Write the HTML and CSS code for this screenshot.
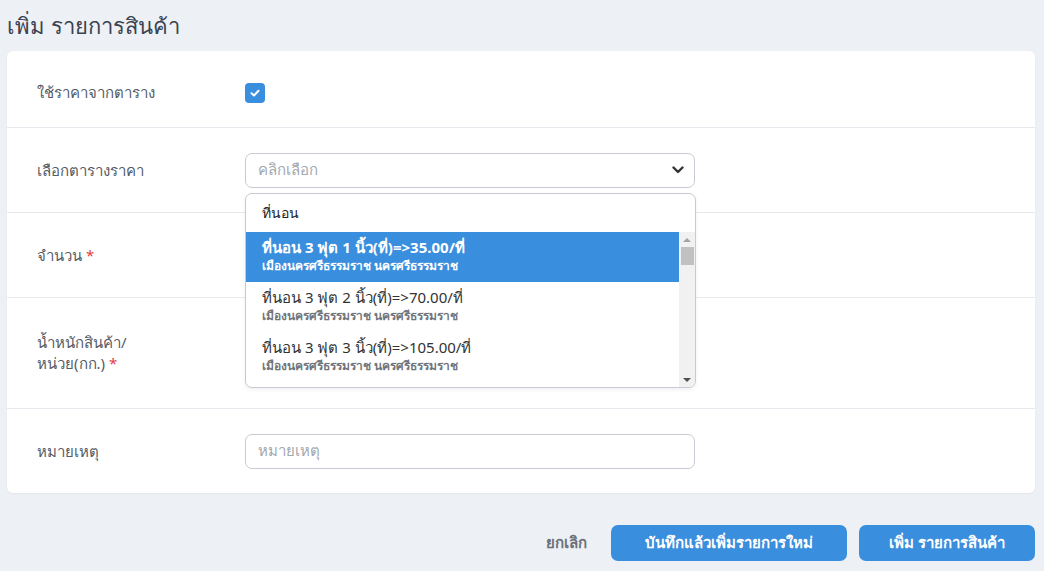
FILE: index.html
```html
<!DOCTYPE html>
<html lang="th">
<head>
<meta charset="utf-8">
<link rel="stylesheet" href="styles.css">
</head>
<body>
<div class="page">
  <h1 class="title">เพิ่ม รายการสินค้า</h1>
  <div class="card">
    <div class="row row-check">
      <div class="label">ใช้ราคาจากตาราง</div>
      <div class="field">
        <span class="checkbox">
          <svg width="12" height="12" viewBox="0 0 12 12"><path d="M2.5 6.2 L5 8.5 L9.5 3.8" fill="none" stroke="#fff" stroke-width="2" stroke-linecap="round" stroke-linejoin="round"/></svg>
        </span>
      </div>
    </div>
    <div class="row">
      <div class="label">เลือกตารางราคา</div>
      <div class="field">
        <div class="select-wrap">
          <div class="select">
            <span class="placeholder">คลิกเลือก</span>
            <svg class="chev" width="12" height="8" viewBox="0 0 12 8"><path d="M1.5 1.5 L6 6 L10.5 1.5" fill="none" stroke="#333" stroke-width="2.4" stroke-linecap="round" stroke-linejoin="round"/></svg>
          </div>
          <div class="dropdown">
            <div class="group">ที่นอน</div>
            <div class="scroll">
              <div class="options">
                <div class="option active">
                  <div class="opt-title">ที่นอน 3 ฟุต 1 นิ้ว(ที่)=&gt;35.00/ที่</div>
                  <div class="opt-sub">เมืองนครศรีธรรมราช นครศรีธรรมราช</div>
                </div>
                <div class="option">
                  <div class="opt-title">ที่นอน 3 ฟุต 2 นิ้ว(ที่)=&gt;70.00/ที่</div>
                  <div class="opt-sub">เมืองนครศรีธรรมราช นครศรีธรรมราช</div>
                </div>
                <div class="option">
                  <div class="opt-title">ที่นอน 3 ฟุต 3 นิ้ว(ที่)=&gt;105.00/ที่</div>
                  <div class="opt-sub">เมืองนครศรีธรรมราช นครศรีธรรมราช</div>
                </div>
                <div class="option">
                  <div class="opt-title">ที่นอน 3 ฟุต 4 นิ้ว(ที่)=&gt;140.00/ที่</div>
                  <div class="opt-sub">เมืองนครศรีธรรมราช นครศรีธรรมราช</div>
                </div>
              </div>
              <div class="scrollbar">
                <span class="arrow up"></span>
                <span class="thumb"></span>
                <span class="track"></span>
                <span class="arrow down"></span>
              </div>
            </div>
          </div>
        </div>
      </div>
    </div>
    <div class="row">
      <div class="label">จำนวน <span class="req">*</span></div>
      <div class="field"><div class="input"></div></div>
    </div>
    <div class="row row-tall">
      <div class="label">น้ำหนักสินค้า/<br>หน่วย(กก.) <span class="req">*</span></div>
      <div class="field"><div class="input"></div></div>
    </div>
    <div class="row">
      <div class="label">หมายเหตุ</div>
      <div class="field"><div class="input"><span class="placeholder">หมายเหตุ</span></div></div>
    </div>
  </div>
  <div class="actions">
    <button class="btn-link">ยกเลิก</button>
    <button class="btn btn-wide">บันทึกแล้วเพิ่มรายการใหม่</button>
    <button class="btn btn-add">เพิ่ม รายการสินค้า</button>
  </div>
</div>
</body>
</html>
```
FILE: styles.css
```css
* { box-sizing: border-box; }
html, body { margin: 0; padding: 0; }
body {
  background: #edf0f4;
  font-family: "Noto Sans", "DejaVu Sans", sans-serif;
  color: #333;
  width: 1044px;
  height: 571px;
  overflow: hidden;
}
.page { padding: 0 9px 0 7px; }
.title {
  margin: 0;
  height: 51px;
  padding-top: 8px;
  font-size: 22px;
  font-weight: 400;
  line-height: 34px;
  color: #3b4250;
}
.card {
  background: #fff;
  border-radius: 6px;
  box-shadow: 0 1px 2px rgba(0,0,0,0.05);
}
.row {
  display: flex;
  align-items: center;
  height: 85px;
  padding: 0 30px;
  border-top: 1px solid #e6e9ed;
}
.row:first-child { border-top: none; height: 76px; padding-top: 7px; }
.row-tall { height: 111px; }
.label {
  width: 208px;
  font-size: 15px;
  line-height: 21px;
  color: #555c66;
}
.req { color: #e0404a; }
.field { width: 450px; position: relative; }
.checkbox {
  display: flex;
  align-items: center;
  justify-content: center;
  width: 20px;
  height: 20px;
  border-radius: 4px;
  background: #3a8ede;
}
.select-wrap { position: relative; }
.select, .input {
  height: 35px;
  border: 1px solid #c5cbd1;
  border-radius: 7px;
  display: flex;
  align-items: center;
  padding: 0 12px;
  background: #fff;
}
.placeholder { color: #a3a8ae; font-size: 15px; }
.select { justify-content: space-between; }
.chev { margin-right: -2px; }
.dropdown {
  position: absolute;
  left: 0;
  top: 40px;
  width: 451px;
  height: 195px;
  background: #fff;
  border: 1px solid #c5cbd1;
  border-radius: 7px;
  overflow: hidden;
  z-index: 5;
  box-shadow: 0 2px 4px rgba(0,0,0,0.06);
}
.group {
  height: 38px;
  padding: 0 16px;
  display: flex;
  align-items: center;
  font-size: 14px;
  color: #222;
}
.scroll { display: flex; height: 156px; }
.options { flex: 1; overflow: hidden; }
.option {
  height: 50px;
  padding: 4px 16px 0;
}
.option.active { background: #3a8ede; color: #fff; }
.opt-title { font-size: 15px; line-height: 22px; color: #333; }
.opt-sub { font-size: 12px; line-height: 16px; color: #70757c; font-weight: 600; }
.option.active .opt-title { color: #fff; font-weight: 700; }
.option.active .opt-sub { color: #fff; font-weight: 700; }
.scrollbar {
  width: 16px;
  background: #f1f1f1;
  display: flex;
  flex-direction: column;
  align-items: center;
}
.arrow { width: 0; height: 0; border-left: 4px solid transparent; border-right: 4px solid transparent; margin: 6px 0 5px; }
.arrow.up { border-bottom: 4px solid #a3a3a3; }
.arrow.down { border-top: 4px solid #505050; margin: 5px 0 6px; }
.thumb { width: 13px; height: 18px; background: #c1c1c1; }
.track { flex: 1; }
.actions {
  display: flex;
  justify-content: flex-end;
  align-items: center;
  gap: 12px;
  margin-top: 32px;
}
button { font-family: inherit; cursor: pointer; }
.btn-link {
  background: none;
  border: none;
  font-size: 15px;
  font-weight: 700;
  color: #6b727a;
  padding: 0 12px;
  margin-right: 0;
}
.btn {
  height: 36px;
  border: none;
  border-radius: 7px;
  background: #3a8ede;
  color: #fff;
  font-size: 15px;
  font-weight: 700;
}
.btn-wide { width: 236px; }
.btn-add { width: 176px; }
```
